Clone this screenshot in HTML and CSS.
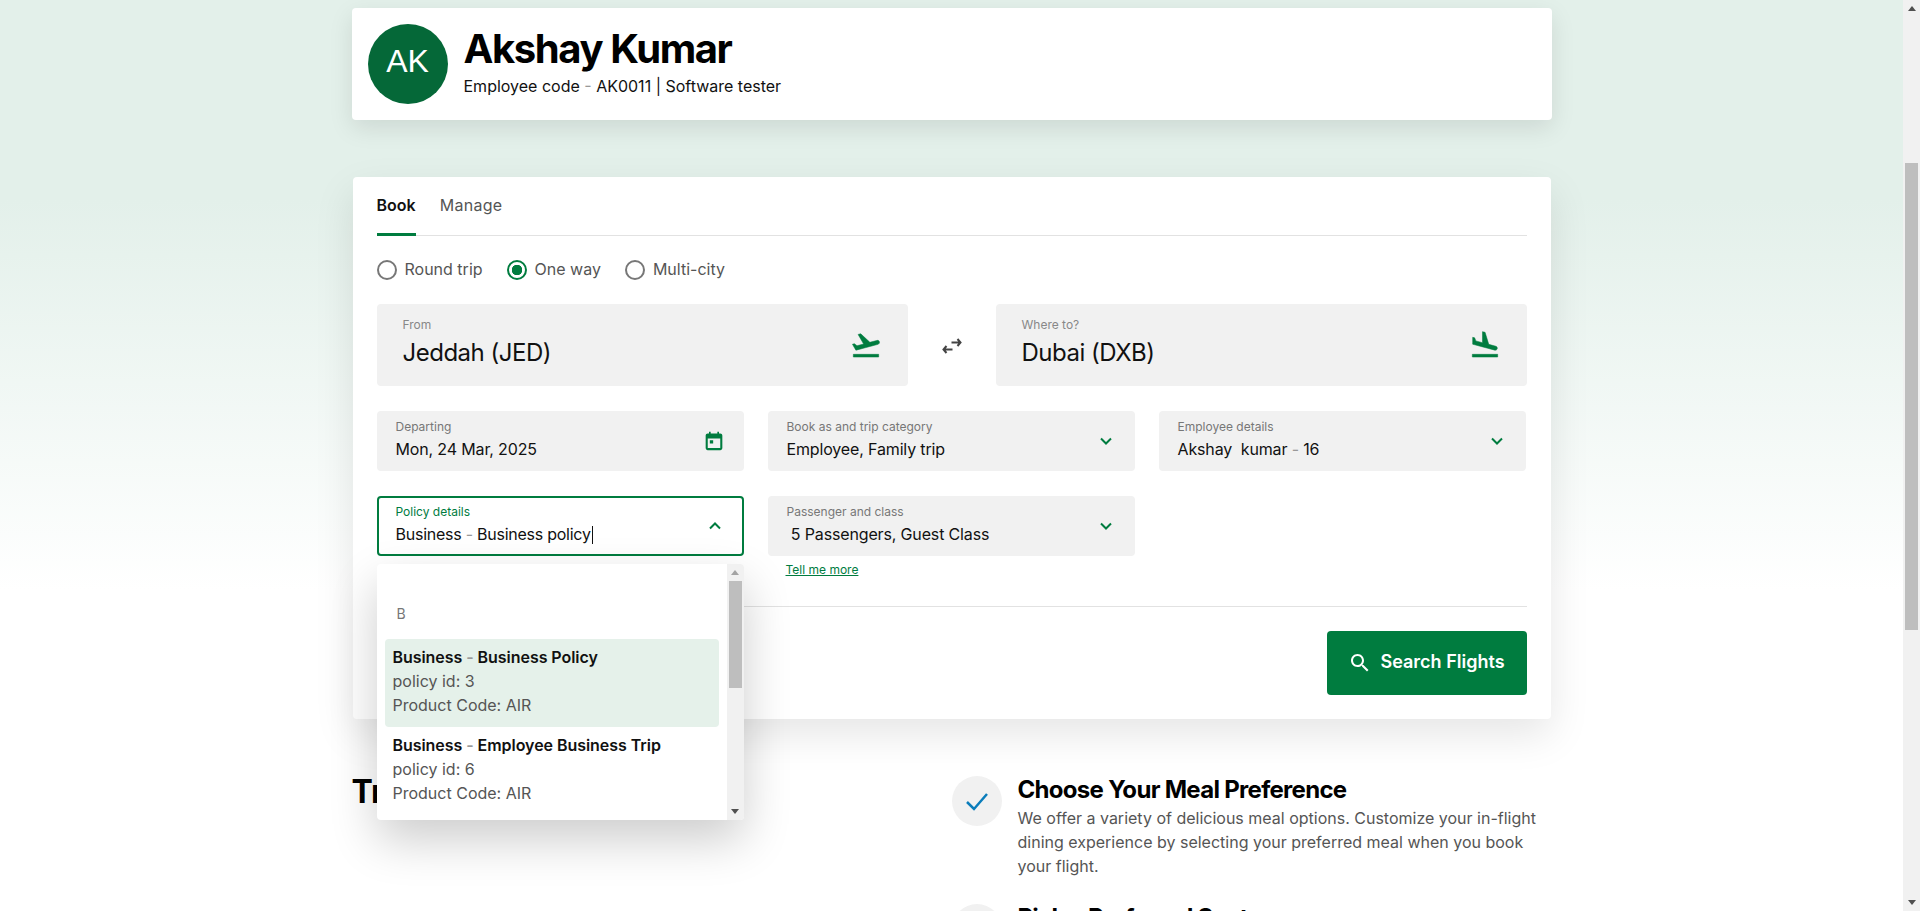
FILE: index.html
```html
<!DOCTYPE html>
<html lang="en">
<head>
    <meta charset="UTF-8">
    <meta name="viewport" content="width=device-width, initial-scale=1.0">
    <title>Book a flight</title>
    <link rel="stylesheet" href="styles.css">
</head>
<body>
    <div class="page">
        <main class="main">
            <div class="container">
                <section class="profile">
                    <div class="avatar"><span class="avatar-text">AK</span></div>
                    <div class="profile-text">
                        <h1 class="profile-name">Akshay Kumar</h1>
                        <p class="profile-meta">Employee code <span class="dash">-</span> AK0011 | Software tester</p>
                    </div>
                </section>

                <section class="booking">
                    <div class="tabs">
                        <a class="tab active">Book</a>
                        <a class="tab">Manage</a>
                    </div>

                    <div class="trip-types">
                        <label class="radio"><span class="radio-dot"></span>Round trip</label>
                        <label class="radio checked"><span class="radio-dot"></span>One way</label>
                        <label class="radio"><span class="radio-dot"></span>Multi-city</label>
                    </div>

                    <div class="airports">
                        <div class="airport">
                            <div class="airport-text">
                                <div class="airport-label">From</div>
                                <div class="airport-value">Jeddah (JED)</div>
                            </div>
                            <svg class="airport-icon" viewBox="0 0 24 24"><path d="M2.5 19h19v2h-19v-2zm19.57-9.36c-.21-.8-1.04-1.28-1.84-1.06L14.92 10l-6.9-6.43-1.93.51 4.14 7.17-4.97 1.33-1.97-1.54-1.45.39 1.82 3.16.77 1.33 1.6-.43 5.31-1.42 4.35-1.16L21 11.49c.81-.23 1.28-1.05 1.07-1.85z"/></svg>
                        </div>
                        <div class="swap">
                            <svg viewBox="0 0 24 24" width="24" height="24"><path d="M3.5 15.500h9M6.500 12l-3 3.500 3 3.500M20.500 8.500h-9M17.500 5l3 3.500-3 3.500" fill="none" stroke="#444" stroke-width="2"/></svg>
                        </div>
                        <div class="airport">
                            <div class="airport-text">
                                <div class="airport-label">Where to?</div>
                                <div class="airport-value">Dubai (DXB)</div>
                            </div>
                            <svg class="airport-icon" viewBox="0 0 24 24"><path d="M2.5 19h19v2h-19v-2zm7.180-5.730l4.350 1.160 5.310 1.420c.8.210 1.620-.26 1.840-1.060.21-.8-.26-1.620-1.060-1.840l-5.310-1.420-2.760-9.020L10.120 2v8.280L5.150 8.950l-.93-2.320-1.450-.39v5.170l1.600.43 5.310 1.430z"/></svg>
                        </div>
                    </div>

                    <div class="fields">
                        <div class="field">
                            <div class="field-text">
                                <div class="field-label">Departing</div>
                                <div class="field-value">Mon, 24 Mar, 2025</div>
                            </div>
                            <svg class="calendar" viewBox="0 0 24 24"><path d="M6 1h2v2h8V1h2v2h1.500C20.900 3 22 4.100 22 5.500v15c0 1.400-1.100 2.500-2.500 2.500h-15C3.100 23 2 21.900 2 20.500v-15C2 4.100 3.100 3 4.500 3H6V1zM4.500 9v11.500h15V9h-15zM7 11h4v4H7v-4z" fill-rule="evenodd"/></svg>
                        </div>
                        <div class="field">
                            <div class="field-text">
                                <div class="field-label">Book as and trip category</div>
                                <div class="field-value">Employee, Family trip</div>
                            </div>
                            <svg class="chevron" viewBox="0 0 14 14"><path d="M2 4.500l5 5 5-5"/></svg>
                        </div>
                        <div class="field">
                            <div class="field-text">
                                <div class="field-label">Employee details</div>
                                <div class="field-value">Akshay&nbsp; kumar <span class="dash">-</span> 16</div>
                            </div>
                            <svg class="chevron" viewBox="0 0 14 14"><path d="M2 4.500l5 5 5-5"/></svg>
                        </div>

                        <div class="field field-open">
                            <div class="field-text">
                                <div class="field-label">Policy details</div>
                                <div class="field-value">Business <span class="dash">-</span> Business policy<span class="caret"></span></div>
                            </div>
                            <svg class="chevron" viewBox="0 0 14 14"><path d="M2 9.500l5-5 5 5"/></svg>

                            <div class="dropdown">
                                <div class="dropdown-list">
                                    <div class="dropdown-group">B</div>
                                    <div class="option selected">
                                        <strong>Business <span class="dash">-</span> Business Policy</strong>
                                        <span>policy id: 3</span>
                                        <span>Product Code: AIR</span>
                                    </div>
                                    <div class="option">
                                        <strong>Business <span class="dash">-</span> Employee Business Trip</strong>
                                        <span>policy id: 6</span>
                                        <span>Product Code: AIR</span>
                                    </div>
                                </div>
                                <div class="scrollbar scrollbar-small">
                                    <span class="arrow-up"></span>
                                    <span class="thumb"></span>
                                    <span class="arrow-down"></span>
                                </div>
                            </div>
                        </div>
                        <div class="field-wrap">
                            <div class="field">
                                <div class="field-text">
                                    <div class="field-label">Passenger and class</div>
                                    <div class="field-value">&nbsp;5 Passengers, Guest Class</div>
                                </div>
                                <svg class="chevron" viewBox="0 0 14 14"><path d="M2 4.500l5 5 5-5"/></svg>
                            </div>
                            <a class="tell-more">Tell me more</a>
                        </div>
                    </div>

                    <div class="booking-footer">
                        <button class="search-btn">
                            <svg viewBox="0 0 24 24" width="24" height="24"><path d="M15.500 14h-.79l-.28-.27C15.410 12.590 16 11.110 16 9.500 16 5.910 13.090 3 9.500 3S3 5.910 3 9.500 5.910 16 9.500 16c1.610 0 3.090-.59 4.230-1.570l.27.28v.79l5 4.990L20.490 19l-4.990-5zm-6 0C7.010 14 5 11.990 5 9.500S7.010 5 9.500 5 14 7.010 14 9.500 11.990 14 9.500 14z"/></svg>
                            <span class="search-label">Search Flights</span>
                        </button>
                    </div>
                </section>

                <section class="info">
                    <h2 class="info-title">Travel Benefits</h2>
                    <div class="info-list">
                        <div class="info-item">
                            <div class="info-check">
                                <svg viewBox="0 0 24 24" width="24" height="24"><path d="M2 13l7 7L22 5" fill="none" stroke="#0b7dbb" stroke-width="2.500"/></svg>
                            </div>
                            <div class="info-text">
                                <h3>Choose Your Meal Preference</h3>
                                <p>We offer a variety of delicious meal options. Customize your in-flight dining experience by selecting your preferred meal when you book your flight.</p>
                            </div>
                        </div>
                        <div class="info-item">
                            <div class="info-check"></div>
                            <div class="info-text">
                                <h3>Pick a Preferred Seat</h3>
                            </div>
                        </div>
                    </div>
                </section>
            </div>
        </main>

        <div class="scrollbar scrollbar-page">
            <span class="arrow-up"></span>
            <span class="thumb"></span>
            <span class="arrow-down"></span>
        </div>
    </div>
</body>
</html>
```

FILE: styles.css
```css
* {
    box-sizing: border-box;
}

body {
    margin: 0;
    font-family: 'Inter', 'Liberation Sans', sans-serif;
    color: #111;
    overflow: hidden;
}

h1, h2, h3, p {
    margin: 0;
}

.page {
    display: flex;
    height: 100vh;
}

.main {
    flex: 1;
    height: 100vh;
    overflow: hidden;
    background: linear-gradient(to bottom, #e3f0ea 0, #e3f0ea 200px, #fff 590px);
}

.container {
    width: 1200px;
    margin: 0 auto;
    padding-top: 8px;
}

.dash {
    color: #999;
}

/* profile card */
.profile {
    display: flex;
    align-items: center;
    gap: 16px;
    height: 112px;
    padding: 0 16px;
    background: #fff;
    border-radius: 4px;
    box-shadow: 0 8px 24px rgba(0, 0, 0, 0.1);
}

.avatar {
    display: flex;
    align-items: center;
    justify-content: center;
    width: 80px;
    height: 80px;
    border-radius: 50%;
    background: #056838;
    color: #fff;
    font-size: 32px;
    font-family: 'Liberation Sans', sans-serif;
}

.avatar-text {
    margin-bottom: 5px;
}

.profile-text {
    margin-bottom: 7px;
}

.profile-name {
    font-size: 40px;
    line-height: 51px;
    font-weight: 700;
    letter-spacing: -1.4px;
    color: #000;
}

.profile-meta {
    font-size: 16px;
    line-height: 24px;
}

/* booking card */
.booking {
    margin: 57px 1px 0;
    padding: 0 24px 24px;
    background: #fff;
    border-radius: 4px;
    box-shadow: 0 16px 40px rgba(0, 0, 0, 0.1);
}

.tabs {
    display: flex;
    gap: 24px;
    height: 59px;
    border-bottom: 1px solid #e2e2e2;
}

.tab {
    height: 59px;
    padding-top: 18px;
    font-size: 16px;
    color: #555;
}

.tab.active {
    font-weight: 600;
    color: #111;
    border-bottom: 3px solid #007c3f;
}

.tab:not(.active) {
    letter-spacing: 0.3px;
}

.trip-types {
    display: flex;
    gap: 24px;
    margin-top: 24px;
}

.radio {
    display: flex;
    align-items: flex-start;
    gap: 8px;
    height: 20px;
    font-size: 16px;
    line-height: 18px;
    color: #555;
}

.radio-dot {
    width: 20px;
    height: 20px;
    border: 2px solid #777;
    border-radius: 50%;
}

.radio.checked .radio-dot {
    border-color: #007c3f;
    background: radial-gradient(circle, #007c3f 0, #007c3f 5px, #fff 5.500px);
}

.airports {
    display: flex;
    margin-top: 24px;
}

.airport {
    flex: 1;
    display: flex;
    align-items: center;
    justify-content: space-between;
    height: 82px;
    padding: 0 26px;
    background: #f1f1f1;
    border-radius: 4px;
}

.airport-text {
    margin-bottom: 5px;
}

.airport-label {
    font-size: 12px;
    line-height: 16px;
    color: #888;
}

.airport-value {
    margin-top: 4px;
    font-size: 24px;
    line-height: 32px;
    letter-spacing: -0.5px;
}

.airport-icon {
    width: 32px;
    height: 32px;
    fill: #007c3f;
    stroke: #007c3f;
    stroke-width: 0.4;
}

.swap {
    display: flex;
    align-items: center;
    justify-content: center;
    width: 88px;
    padding-top: 2px;
}

.fields {
    display: grid;
    grid-template-columns: repeat(3, 367px);
    gap: 25px 24px;
    margin-top: 25px;
}

.field {
    position: relative;
    display: flex;
    align-items: center;
    justify-content: space-between;
    height: 60px;
    padding: 0 18px 0 19px;
    background: #f1f1f1;
    border-radius: 4px;
}

.field-text {
    margin-bottom: 4px;
}

.field-label {
    font-size: 12px;
    line-height: 16px;
    color: #777;
}

.field-value {
    margin-top: 4px;
    font-size: 16px;
    line-height: 20px;
    letter-spacing: -0.15px;
}

.calendar {
    width: 20px;
    height: 20px;
    margin-right: 2px;
    fill: #007c3f;
}

.chevron {
    width: 14px;
    height: 14px;
    margin-right: 4px;
    fill: none;
    stroke: #007c3f;
    stroke-width: 2;
}

.field-open {
    background: #fff;
    border: 2px solid #007c3f;
    padding: 0 16px 0 17px;
}

.field-open .field-label {
    color: #007c3f;
}

.field-open .field-value {
    letter-spacing: -0.25px;
}

.caret {
    display: inline-block;
    width: 1px;
    height: 18px;
    margin-left: 1px;
    background: #111;
    vertical-align: -4px;
}

.tell-more {
    display: block;
    margin: 6px 0 0 18px;
    font-size: 12px;
    line-height: 16px;
    color: #007c3f;
    text-decoration: underline;
}

/* policy dropdown */
.dropdown {
    position: absolute;
    top: 66px;
    left: -2px;
    z-index: 5;
    display: flex;
    width: 367px;
    height: 256px;
    background: #fff;
    border-radius: 4px;
    overflow: hidden;
    box-shadow: 0 20px 48px rgba(0, 0, 0, 0.2);
}

.dropdown-list {
    flex: 1;
    padding: 0 8px;
}

.dropdown-group {
    height: 75px;
    padding: 38px 0 0 12px;
    font-size: 14px;
    line-height: 24px;
    color: #777;
}

.option {
    display: flex;
    flex-direction: column;
    height: 88px;
    padding: 6px 8px 0 8px;
    font-size: 16px;
    line-height: 24px;
    color: #555;
    border-radius: 4px;
}

.option strong {
    font-weight: 600;
    color: #111;
    letter-spacing: -0.05px;
}

.option.selected {
    background: #e5f1ea;
}

/* scrollbars */
.scrollbar {
    display: flex;
    flex-direction: column;
    align-items: center;
    width: 17px;
    background: #f1f1f1;
}

.scrollbar-page {
    flex: none;
    height: 100vh;
}

.arrow-up, .arrow-down {
    flex: none;
    width: 0;
    height: 0;
    margin: 6px 0;
    border-left: 4px solid transparent;
    border-right: 4px solid transparent;
}

.arrow-up {
    border-bottom: 5px solid #505050;
}

.arrow-down {
    margin-top: auto;
    border-top: 5px solid #505050;
}

.thumb {
    width: 13px;
    background: #bebebe;
}

.scrollbar-page .thumb {
    height: 467px;
    margin-top: 146px;
}

.scrollbar-small .thumb {
    height: 107px;
}

.scrollbar-small .arrow-up {
    border-bottom-color: #a3a3a3;
}

.booking-footer {
    display: flex;
    justify-content: flex-end;
    margin-top: 28px;
    padding-top: 24px;
    border-top: 1px solid #e2e2e2;
}

.search-btn {
    display: flex;
    align-items: center;
    justify-content: center;
    gap: 8px;
    width: 200px;
    height: 64px;
    background: #007c3f;
    border: none;
    border-radius: 4px;
    color: #fff;
    font-family: inherit;
    font-size: 18px;
    font-weight: 600;
    cursor: pointer;
}

.search-btn svg {
    fill: #fff;
}

.search-label {
    margin-bottom: 4px;
}

/* info section */
.info {
    display: flex;
    padding-top: 57px;
}

.info-title {
    width: 600px;
    margin-top: -6px;
    font-size: 32px;
    line-height: 44px;
    font-weight: 700;
    color: #000;
}

.info-list {
    flex: 1;
}

.info-item {
    display: flex;
    gap: 16px;
    margin-bottom: 26px;
}

.info-check {
    flex: none;
    display: flex;
    align-items: center;
    justify-content: center;
    width: 50px;
    height: 50px;
    border-radius: 50%;
    background: #f1f1f1;
}

.info-text {
    margin-top: -2px;
}

.info-item h3 {
    font-size: 24px;
    line-height: 32px;
    font-weight: 700;
    letter-spacing: -0.7px;
    color: #000;
}

.info-item p {
    font-size: 16px;
    line-height: 24px;
    color: #555;
}
```
